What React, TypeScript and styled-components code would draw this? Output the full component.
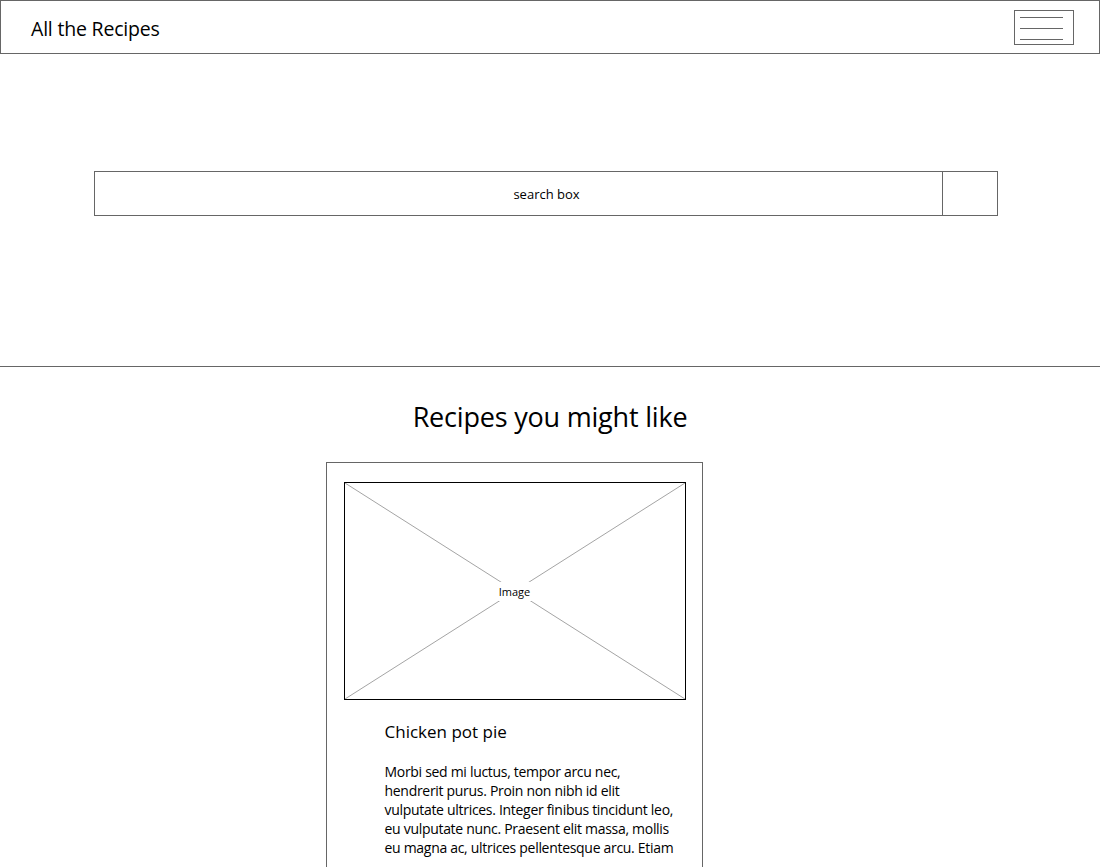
import React from "react";
import styled, { createGlobalStyle } from "styled-components";

const Global = createGlobalStyle`
  html, body { margin: 0; padding: 0; background: #fff; }
  body { font-family: "Open Sans", "Noto Sans", sans-serif; color: #000; overflow: hidden; }
  * { box-sizing: border-box; }
`;

const Page = styled.div`
  width: 1100px;
  display: flex;
  flex-direction: column;
`;

const Header = styled.header`
  height: 54px;
  border: 1px solid #666;
  display: flex;
  align-items: center;
  justify-content: space-between;
  padding: 0 25px 0 30px;
`;

const Brand = styled.div`
  font-size: 19.5px;
  letter-spacing: -0.2px;
  padding-top: 3px;
`;

const MenuButton = styled.button`
  width: 60px;
  height: 35px;
  border: 1px solid #666;
  background: #fff;
  margin-top: 1px;
  display: flex;
  flex-direction: column;
  justify-content: space-between;
  align-items: flex-start;
  padding: 6px 0 4px 5px;
`;

const MenuLine = styled.span`
  display: block;
  width: 43px;
  height: 1px;
  background: #666;
`;

const Hero = styled.section`
  height: 313px;
  border-bottom: 1px solid #666;
  padding: 117px 0 0 94px;
`;

const SearchBar = styled.div`
  width: 904px;
  height: 45px;
  border: 1px solid #666;
  display: flex;
`;

const SearchInput = styled.div`
  flex: 1;
  display: flex;
  align-items: center;
  justify-content: center;
  font-size: 13px;
  padding-left: 56px;
`;

const SearchButton = styled.div`
  width: 55px;
  border-left: 1px solid #666;
`;

const Section = styled.section`
  display: flex;
  flex-direction: column;
  align-items: center;
`;

const Heading = styled.h2`
  margin: 32px 0 0;
  font-size: 27px;
  font-weight: 400;
  line-height: 36px;
  letter-spacing: -0.2px;
`;

const Card = styled.article`
  width: 377px;
  margin: 27px 0 0 -72px;
  border: 1px solid #666;
  border-bottom: none;
  padding: 19px 17px 40px 17px;
`;

const ImageBox = styled.div`
  position: relative;
  width: 342px;
  height: 218px;
  border: 1px solid #000;
  display: flex;
  align-items: center;
  justify-content: center;
`;

const Cross = styled.svg`
  position: absolute;
  inset: 0;
  width: 100%;
  height: 100%;
`;

const ImageLabel = styled.span`
  position: relative;
  background: #fff;
  font-size: 11px;
  padding: 3px 4px;
  line-height: 13px;
`;

const CardBody = styled.div`
  padding: 20px 8px 0 41px;
`;

const CardTitle = styled.h3`
  margin: 0;
  font-size: 17px;
  font-weight: 400;
  line-height: 24px;
`;

const CardText = styled.p`
  margin: 18px 0 0;
  font-size: 14px;
  line-height: 19px;
  letter-spacing: -0.3px;
`;

export default function App() {
  return (
    <Page>
      <Global />
      <Header>
        <Brand>All the Recipes</Brand>
        <MenuButton aria-label="menu">
          <MenuLine />
          <MenuLine />
          <MenuLine />
        </MenuButton>
      </Header>
      <Hero>
        <SearchBar>
          <SearchInput>search box</SearchInput>
          <SearchButton />
        </SearchBar>
      </Hero>
      <Section>
        <Heading>Recipes you might like</Heading>
        <Card>
          <ImageBox>
            <Cross viewBox="0 0 100 100" preserveAspectRatio="none">
              <line x1="0" y1="0" x2="100" y2="100" stroke="#666" strokeWidth="0.6" vectorEffect="non-scaling-stroke" />
              <line x1="100" y1="0" x2="0" y2="100" stroke="#666" strokeWidth="0.6" vectorEffect="non-scaling-stroke" />
            </Cross>
            <ImageLabel>Image</ImageLabel>
          </ImageBox>
          <CardBody>
            <CardTitle>Chicken pot pie</CardTitle>
            <CardText>
              Morbi sed mi luctus, tempor arcu nec, hendrerit purus. Proin non nibh id elit
              vulputate ultrices. Integer finibus tincidunt leo, eu vulputate nunc. Praesent
              elit massa, mollis eu magna ac, ultrices pellentesque arcu. Etiam
            </CardText>
          </CardBody>
        </Card>
      </Section>
    </Page>
  );
}
